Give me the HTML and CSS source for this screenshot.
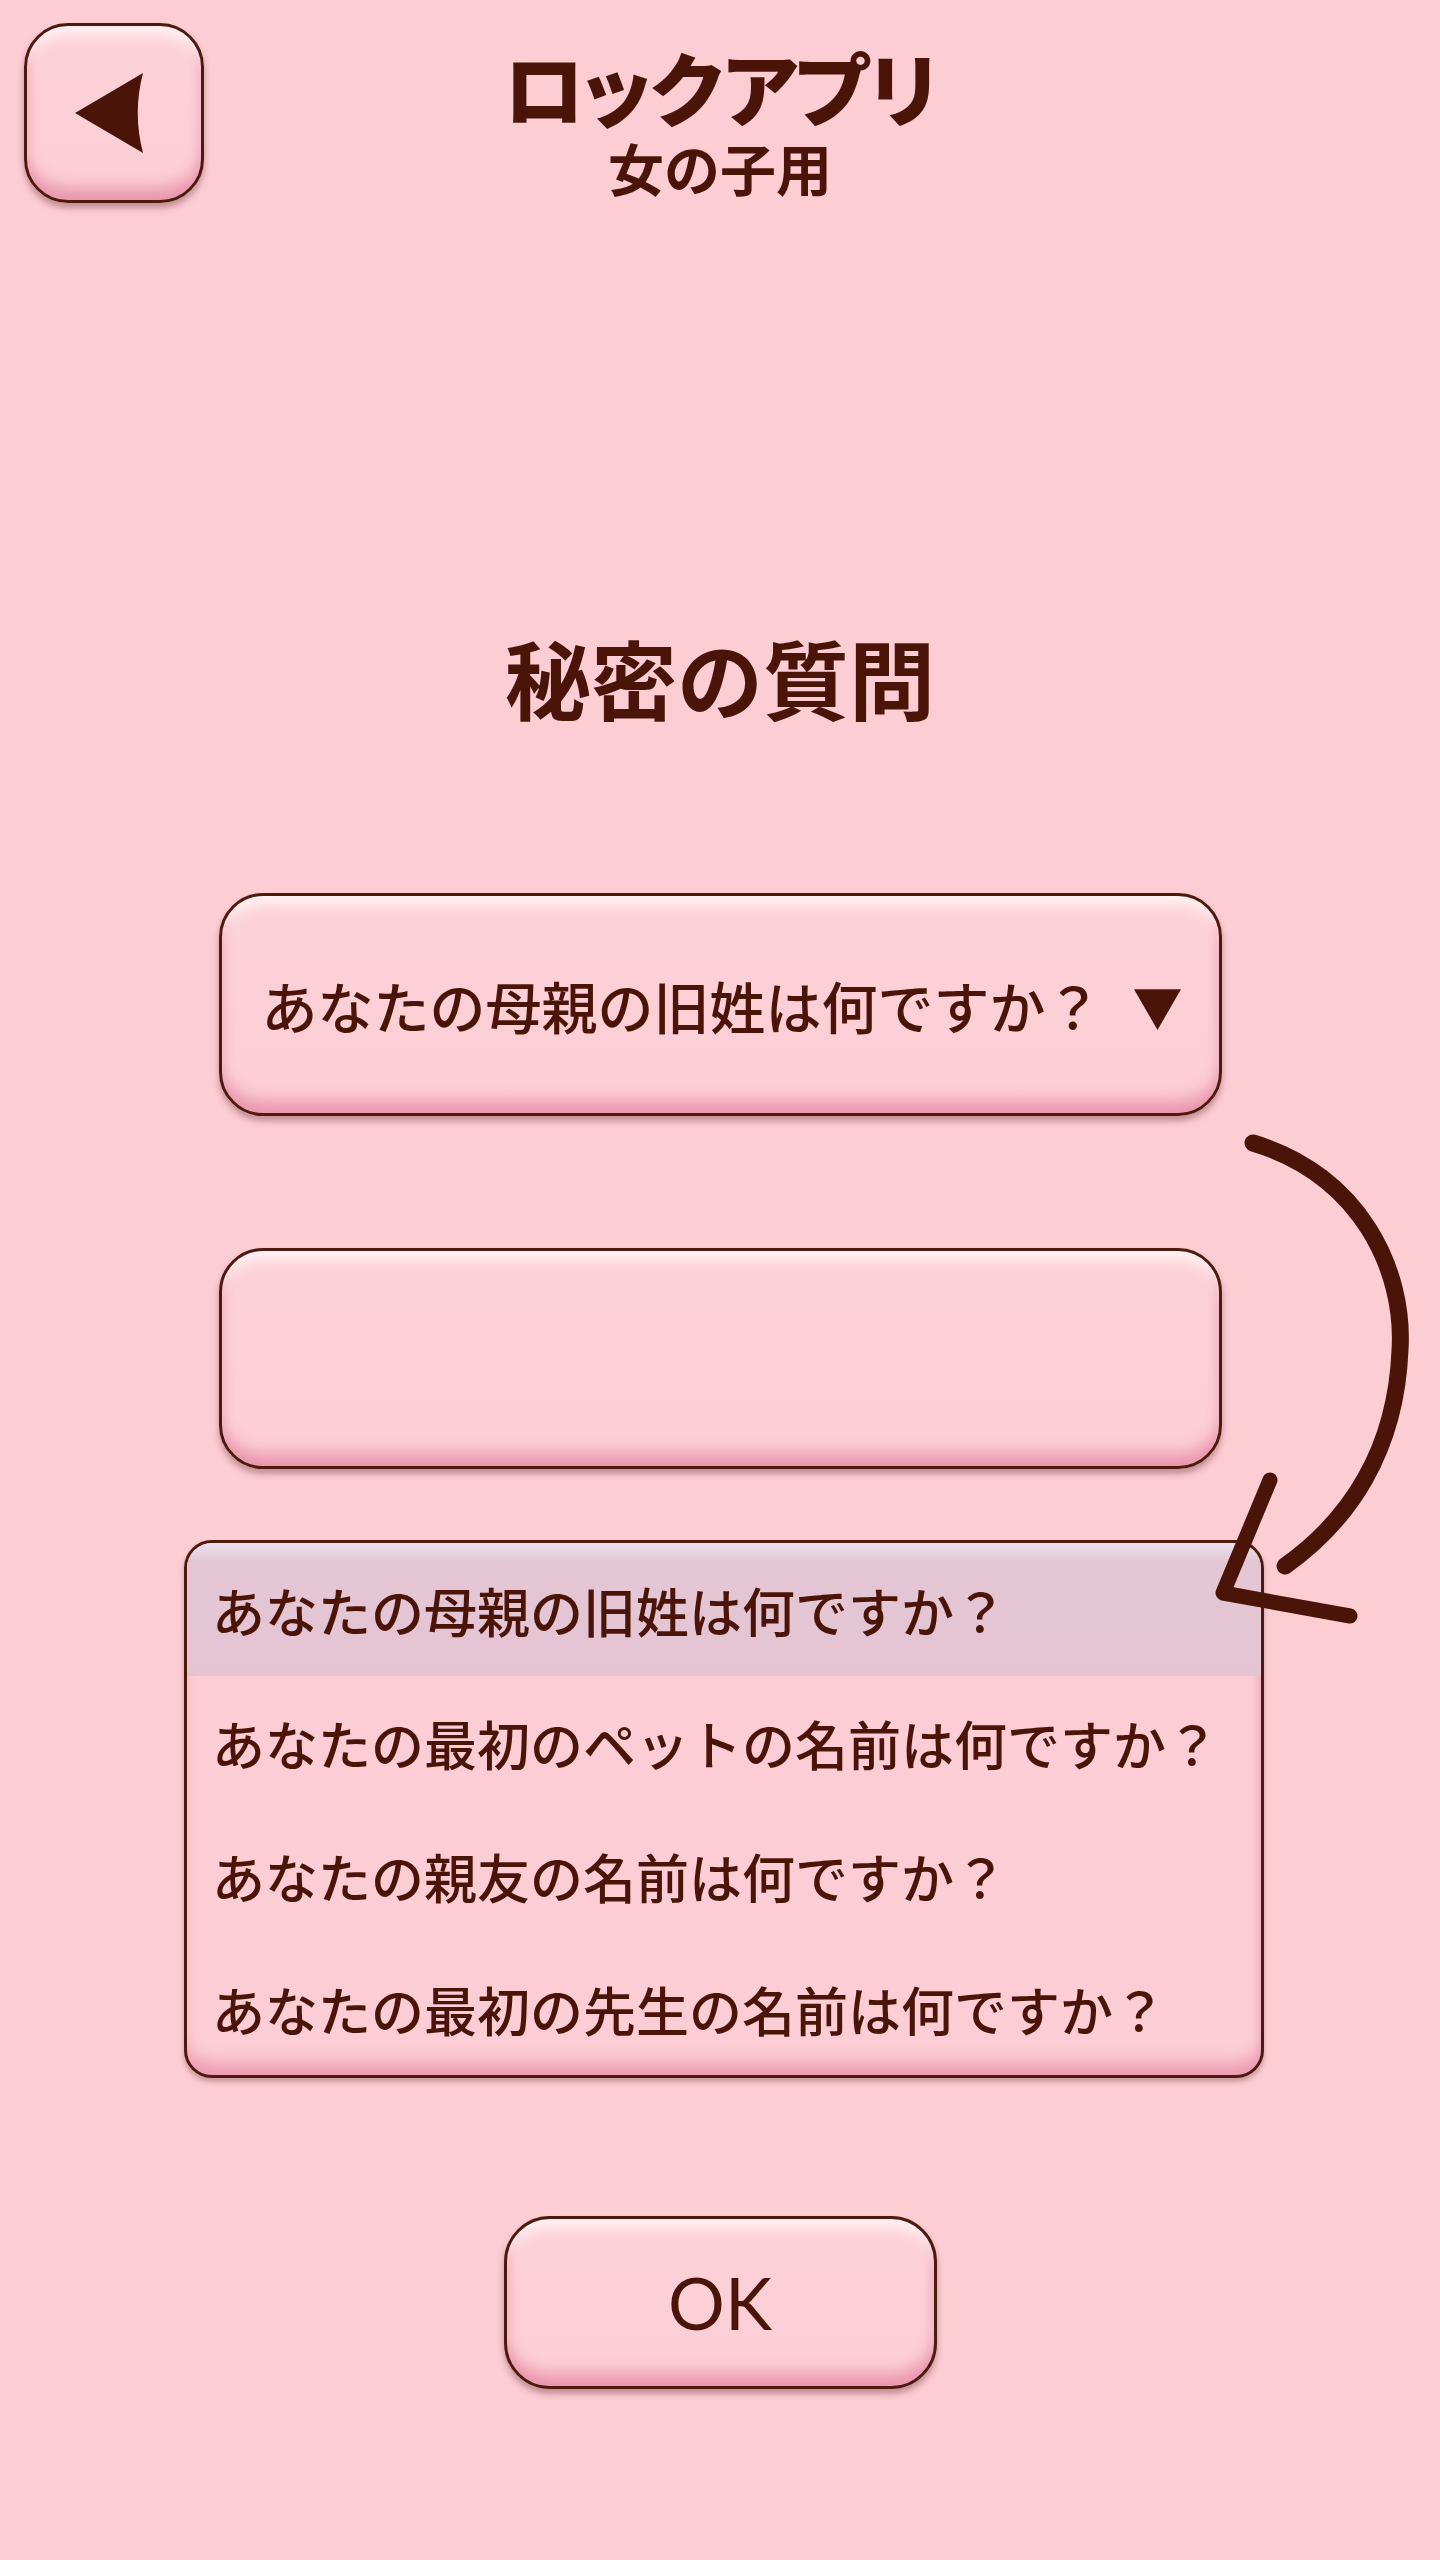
FILE: index.html
```html
<!DOCTYPE html>
<html lang="ja">
<head>
  <meta charset="UTF-8">
  <meta name="viewport" content="width=device-width, initial-scale=1.0">
  <title>ロックアプリ 女の子用 - 秘密の質問</title>
  <link rel="stylesheet" href="styles.css">
</head>
<body>
  <div class="screen">
    <header class="top-bar">
      <button class="back-btn glossy" type="button" aria-label="戻る">
        <svg class="back-icon" width="68" height="80" viewBox="0 0 68 80">
          <path d="M0 40 L68 0 C61 27 61 53 68 80 Z" fill="#4a1508"/>
        </svg>
      </button>
      <div class="app-title">
        <span class="title-main">ロックアプリ</span>
        <span class="title-sub">女の子用</span>
      </div>
    </header>

    <main class="question-form">
      <h1 class="form-heading">秘密の質問</h1>

      <div class="field select-field glossy">
        <span>あなたの母親の旧姓は何ですか？</span>
        <span class="caret">▼</span>
      </div>

      <div class="field input-field glossy"></div>

      <ul class="option-list">
        <li class="selected">あなたの母親の旧姓は何ですか？</li>
        <li>あなたの最初のペットの名前は何ですか？</li>
        <li>あなたの親友の名前は何ですか？</li>
        <li>あなたの最初の先生の名前は何ですか？</li>
      </ul>

      <button class="ok-btn glossy" type="button">OK</button>
    </main>

    <svg class="hint-arrow" width="220" height="520" viewBox="0 0 220 520">
      <path d="M53 23 C160 55 205 150 200 230 C196 330 150 400 85 446" fill="none" stroke="#4a1508" stroke-width="17" stroke-linecap="round"/>
      <path d="M70 360 L23 473 L150 496" fill="none" stroke="#4a1508" stroke-width="15" stroke-linecap="round" stroke-linejoin="round"/>
    </svg>
  </div>
</body>
</html>
```

FILE: styles.css
```css
body {
  margin: 0;
  padding: 0;
  background-color: #fdcdd4;
  font-family: "Noto Sans CJK JP", "Noto Sans", sans-serif;
  color: #4a1508;
}

button {
  font: inherit;
  color: inherit;
  cursor: pointer;
}

.screen {
  position: relative;
  width: 1440px;
  min-height: 2560px;
}

.glossy {
  box-sizing: border-box;
  border: 3px solid #4d1a0e;
  background: linear-gradient(#fdd2d8, #fccdd4);
  box-shadow:
    inset 0 16px 14px -8px #fff5f6,
    inset 0 -18px 16px -6px #e995ad,
    inset 9px 0 10px -7px #f2b2c3,
    inset -9px 0 10px -7px #f2b2c3,
    0 5px 6px rgba(90, 25, 35, 0.35);
}

.top-bar {
  display: grid;
  grid-template-columns: 1fr auto 1fr;
  align-items: start;
  padding: 23px 24px 0;
}

.back-btn {
  width: 180px;
  height: 180px;
  border-radius: 44px;
  padding: 0;
  display: flex;
  align-items: center;
  justify-content: center;
}

.back-icon {
  margin-right: 10px;
}

.app-title {
  display: flex;
  flex-direction: column;
  align-items: center;
  padding-top: 22px;
  font-weight: 900;
}

.title-main {
  font-size: 80px;
  line-height: 80px;
  letter-spacing: -8px;
}

.title-sub {
  margin-top: 12px;
  font-size: 56px;
  line-height: 60px;
  font-weight: 700;
}

.question-form {
  display: flex;
  flex-direction: column;
  align-items: center;
}

.form-heading {
  margin: 431px 0 0;
  font-size: 86px;
  line-height: 1;
  font-weight: 700;
}

.field {
  width: 1003px;
  border-radius: 44px;
}

.select-field {
  margin-top: 173px;
  height: 223px;
  display: flex;
  align-items: center;
  justify-content: space-between;
  padding: 0 36px 0 40px;
  font-size: 56px;
  font-weight: 500;
}

.caret {
  font-size: 50px;
}

.input-field {
  margin-top: 132px;
  height: 221px;
}

.option-list {
  box-sizing: border-box;
  width: 1080px;
  margin: 71px 0 0 8px;
  padding: 0;
  list-style: none;
  border: 3px solid #4d1a0e;
  border-radius: 28px;
  overflow: hidden;
  background: #fccdd4;
  box-shadow:
    inset 0 -18px 16px -6px #ec9bb2,
    inset -8px 0 10px -7px #e9a8bd,
    0 4px 5px rgba(90, 25, 35, 0.3);
}

.option-list li {
  height: 133px;
  display: flex;
  align-items: center;
  padding-left: 25px;
  font-size: 53px;
  font-weight: 500;
}

.option-list li.selected {
  background: linear-gradient(#e8e2ee, #e5c6d4 14%, #e4c4d3);
}

.ok-btn {
  margin-top: 138px;
  width: 433px;
  height: 173px;
  border-radius: 46px;
  font-family: Lato, "Noto Sans", sans-serif;
  font-size: 71px;
  font-weight: 400;
}

.hint-arrow {
  position: absolute;
  left: 1200px;
  top: 1120px;
}
```
